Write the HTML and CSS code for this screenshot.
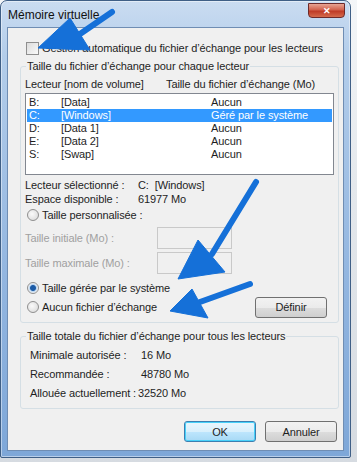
FILE: index.html
```html
<!DOCTYPE html>
<html lang="fr">
<head>
    <meta charset="UTF-8">
    <title>Mémoire virtuelle</title>
    <link rel="stylesheet" href="styles.css">
</head>
<body>

    <div class="window">
        <div class="titlebar">
            <span class="title">Mémoire virtuelle</span>
            <span class="close">&#x2715;</span>
        </div>

        <div class="client">
            <label class="check-row">
                <span class="checkbox"></span>
                Gestion automatique du fichier d’échange pour les lecteurs
            </label>

            <fieldset class="group group-drives">
                <legend>Taille du fichier d’échange pour chaque lecteur</legend>

                <div class="list-head">
                    <span class="col-drive">Lecteur [nom de volume]</span>
                    <span>Taille du fichier d’échange (Mo)</span>
                </div>

                <div class="listbox">
                    <div class="row"><span class="col-letter">B:</span><span class="col-name">[Data]</span><span>Aucun</span></div>
                    <div class="row selected"><span class="col-letter">C:</span><span class="col-name">[Windows]</span><span>Géré par le système</span></div>
                    <div class="row"><span class="col-letter">D:</span><span class="col-name">[Data 1]</span><span>Aucun</span></div>
                    <div class="row"><span class="col-letter">E:</span><span class="col-name">[Data 2]</span><span>Aucun</span></div>
                    <div class="row"><span class="col-letter">S:</span><span class="col-name">[Swap]</span><span>Aucun</span></div>
                </div>

                <div class="info">
                    <span>Lecteur sélectionné :</span><span>C:&nbsp;&nbsp;[Windows]</span>
                    <span>Espace disponible :</span><span>61977 Mo</span>
                </div>

                <label class="radio-row custom">
                    <span class="radio"></span>
                    Taille personnalisée :
                </label>

                <div class="size-field disabled first">
                    <span class="field-label">Taille initiale (Mo) :</span>
                    <span class="textbox"></span>
                </div>
                <div class="size-field disabled">
                    <span class="field-label">Taille maximale (Mo) :</span>
                    <span class="textbox"></span>
                </div>

                <label class="radio-row system">
                    <span class="radio checked"></span>
                    Taille gérée par le système
                </label>
                <div class="last-row">
                    <label class="radio-row">
                        <span class="radio"></span>
                        Aucun fichier d’échange
                    </label>
                    <button class="btn">Définir</button>
                </div>
            </fieldset>

            <fieldset class="group group-total">
                <legend>Taille totale du fichier d’échange pour tous les lecteurs</legend>
                <div class="totals">
                    <span>Minimale autorisée :</span><span>16 Mo</span>
                    <span>Recommandée :</span><span>48780 Mo</span>
                    <span>Allouée actuellement :</span><span class="tight">32520 Mo</span>
                </div>
            </fieldset>

            <div class="actions">
                <button class="btn default">OK</button>
                <button class="btn">Annuler</button>
            </div>
        </div>
    </div>

    <!-- flèches ajoutées sur la capture -->
    <svg class="arrows" width="357" height="462" viewBox="0 0 357 462">
        <g fill="#1570d8" stroke="#1570d8">
            <line x1="112" y1="12" x2="80" y2="34" stroke-width="6" stroke-linecap="round"/>
            <polygon points="38,48 70,18 90,50" stroke-width="1" stroke-linejoin="round"/>
            <line x1="256" y1="182" x2="212" y2="254" stroke-width="6" stroke-linecap="round"/>
            <polygon points="178,279 198,240 225,272" stroke-width="1" stroke-linejoin="round"/>
            <line x1="250" y1="284" x2="200" y2="302" stroke-width="6" stroke-linecap="round"/>
            <polygon points="170,311 192,289 208,318" stroke-width="1" stroke-linejoin="round"/>
        </g>
    </svg>

</body>
</html>
```

FILE: styles.css
```css
:root {
    --text: #1e1e1e;
    --muted: #a0a0a0;
    --face: #f0f0f0;
}

body {
    margin: 0;
    width: 357px;
    height: 462px;
    background: linear-gradient(180deg, #f4f6f8 0%, #e4e8ec 40%, #d6dbe1 100%);
    font-family: 'Liberation Sans', Arial, sans-serif;
    font-size: 11px;
    line-height: 14px;
    letter-spacing: -0.1px;
    color: var(--text);
    position: relative;
    overflow: hidden;
    white-space: nowrap;
}

.window {
    width: 351px;
    height: 458px;
    box-sizing: border-box;
    border: 1px solid #3f5f86;
    border-radius: 7px 7px 2px 2px;
    background: linear-gradient(180deg, #cadcf1 0%, #b3cdea 12%, #93b6e0 60%, #7ea7d8 100%);
    box-shadow: inset 0 0 0 1px rgba(255, 255, 255, 0.45);
    padding: 0 6px 6px;
    display: flex;
    flex-direction: column;
}

.titlebar {
    height: 26px;
    display: flex;
    justify-content: space-between;
    align-items: flex-start;
}

.title {
    font-size: 12px;
    letter-spacing: 0;
    margin: 7px 0 0 1px;
    color: #101010;
}

.close {
    width: 37px;
    height: 15px;
    margin: 2px -1px 0 0;
    border: 1px solid #6d2a2a;
    border-radius: 0 0 4px 4px;
    background: linear-gradient(180deg, #e8a493 0%, #d2624d 45%, #bf3a26 55%, #d46a4c 100%);
    color: #fff;
    font-size: 9px;
    font-weight: 700;
    text-align: center;
    line-height: 15px;
    box-sizing: border-box;
}

.client {
    flex: 1;
    background: var(--face);
    border: 1px solid #6f8db3;
    padding: 0 4px 0 12px;
}

.check-row,
.radio-row {
    display: flex;
    align-items: center;
    gap: 3px;
    height: 14px;
}

.check-row {
    margin: 13px 0 0 6px;
}

.checkbox {
    width: 11px;
    height: 11px;
    border: 1px solid #8f8f8f;
    background: linear-gradient(135deg, #dcdcdc, #fafafa);
}

.radio {
    width: 10px;
    height: 10px;
    border: 1px solid #8f8f8f;
    border-radius: 50%;
    background: radial-gradient(circle at 40% 40%, #fafafa, #d6d6d6);
}

.radio.checked {
    background: radial-gradient(circle, #1c5ba6 0 2.5px, #bcd7f2 3.5px, #f4f4f4 5px);
}

.group {
    margin: 4px 0 0;
    padding: 0 4px 8px;
    border: 1px solid #d5dfe5;
    border-radius: 3px;
}

.group legend {
    padding: 0 1px;
    margin-left: 1px;
}

.list-head {
    display: flex;
    margin-top: 4px;
}

.col-drive {
    width: 141px;
}

.listbox {
    margin-top: 2px;
    height: 76px;
    border: 1px solid #828790;
    background: #fff;
    padding: 2px 1px 2px;
}

.row {
    display: flex;
    height: 13px;
    line-height: 13px;
    padding-left: 2px;
}

.row.selected {
    background: #3399ff;
    color: #fff;
}

.col-letter {
    width: 32px;
}

.col-name {
    width: 150px;
}

.info {
    display: grid;
    grid-template-columns: 113px auto;
    margin-top: 3px;
}

.radio-row {
    margin-left: 2px;
}

.radio-row.custom {
    margin-top: 2px;
}

.size-field {
    display: flex;
    align-items: center;
    height: 25px;
}

.size-field.first {
    margin-top: 3px;
}

.field-label {
    width: 132px;
}

.disabled {
    color: var(--muted);
}

.textbox {
    width: 73px;
    height: 20px;
    border: 1px solid #c9c9c9;
    background: var(--face);
}

.radio-row.system {
    margin-top: 6px;
}

.last-row {
    display: flex;
    justify-content: space-between;
    align-items: center;
    margin-top: 5px;
    height: 14px;
}

.last-row .radio-row {
    margin-top: 0;
}

.btn {
    font-family: inherit;
    font-size: 11px;
    letter-spacing: inherit;
    color: var(--text);
    width: 72px;
    height: 21px;
    border: 1px solid #707070;
    border-radius: 3px;
    background: linear-gradient(180deg, #f2f2f2 0%, #ebebeb 50%, #dddddd 51%, #cfcfcf 100%);
    padding: 0;
}

.last-row .btn {
    margin: 0 7px 0 0;
}

.group-total {
    margin-top: 6px;
    padding-bottom: 8px;
}

.totals {
    display: grid;
    grid-template-columns: 111px auto;
    row-gap: 5px;
    margin: 5px 0 0 5px;
}

.tight {
    margin-left: -3px;
}

.actions {
    display: flex;
    justify-content: flex-end;
    gap: 9px;
    margin: 12px 2px 0 0;
}

.btn.default {
    border-color: #3c7fb1;
    background: linear-gradient(180deg, #eaf6fd 0%, #d9f0fc 50%, #bee6fd 51%, #a7d9f5 100%);
    box-shadow: inset 0 0 0 1px #48d1f9;
}

.arrows {
    position: absolute;
    left: 0;
    top: 0;
    pointer-events: none;
}
```
